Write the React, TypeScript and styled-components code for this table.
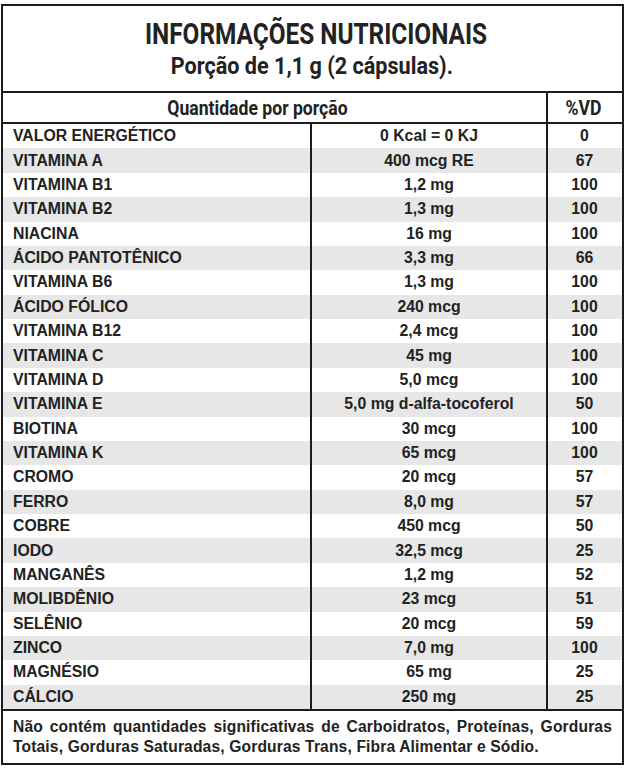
import React from "react";
import styled, { createGlobalStyle } from "styled-components";

const GlobalStyle = createGlobalStyle`
  html, body {
    margin: 0;
    padding: 0;
    background: #ffffff;
  }
  body {
    font-family: "Liberation Sans", Arial, sans-serif;
    color: #222222;
  }
`;

const ROWS: [string, string, string][] = [
  ["VALOR ENERGÉTICO", "0 Kcal = 0 KJ", "0"],
  ["VITAMINA A", "400 mcg RE", "67"],
  ["VITAMINA B1", "1,2 mg", "100"],
  ["VITAMINA B2", "1,3 mg", "100"],
  ["NIACINA", "16 mg", "100"],
  ["ÁCIDO PANTOTÊNICO", "3,3 mg", "66"],
  ["VITAMINA B6", "1,3 mg", "100"],
  ["ÁCIDO FÓLICO", "240 mcg", "100"],
  ["VITAMINA B12", "2,4 mcg", "100"],
  ["VITAMINA C", "45 mg", "100"],
  ["VITAMINA D", "5,0 mcg", "100"],
  ["VITAMINA E", "5,0 mg d-alfa-tocoferol", "50"],
  ["BIOTINA", "30 mcg", "100"],
  ["VITAMINA K", "65 mcg", "100"],
  ["CROMO", "20 mcg", "57"],
  ["FERRO", "8,0 mg", "57"],
  ["COBRE", "450 mcg", "50"],
  ["IODO", "32,5 mcg", "25"],
  ["MANGANÊS", "1,2 mg", "52"],
  ["MOLIBDÊNIO", "23 mcg", "51"],
  ["SELÊNIO", "20 mcg", "59"],
  ["ZINCO", "7,0 mg", "100"],
  ["MAGNÉSIO", "65 mg", "25"],
  ["CÁLCIO", "250 mg", "25"],
];

const Panel = styled.div`
  width: 623px;
  margin: 4px 0 0 1px;
  border: 2px solid #1c1c1c;
  box-sizing: border-box;
  background: #fff;
`;

const TitleBlock = styled.div`
  height: 87px;
  border-bottom: 2px solid #1c1c1c;
  display: flex;
  flex-direction: column;
  align-items: center;
  justify-content: center;
  gap: 2px;
  padding-top: 1px;
  box-sizing: border-box;
`;

const Title = styled.div`
  font-family: "Roboto", sans-serif;
  font-weight: 700;
  font-size: 29px;
  line-height: 32px;
  color: #222;
  transform: scaleX(0.84);
  padding-left: 8px;
`;

const Subtitle = styled.div`
  font-family: "Roboto", sans-serif;
  font-weight: 700;
  font-size: 24px;
  line-height: 28px;
  color: #222;
  transform: scaleX(0.9);
  padding-right: 2px;
`;

const HeadRow = styled.div`
  display: grid;
  grid-template-columns: 543px 73px;
  height: 29px;
  border-bottom: 2px solid #1c1c1c;
`;

const HeadCell = styled.div<{ $shift?: number }>`
  display: flex;
  align-items: center;
  justify-content: center;
  font-family: "Roboto", sans-serif;
  font-weight: 700;
  font-size: 20px;
  color: #222;
  padding-right: ${(p) => p.$shift ?? 0}px;
  & + & {
    border-left: 2px solid #1c1c1c;
  }
  span {
    display: inline-block;
    transform: scaleX(0.88);
  }
`;

const Body = styled.div`
  display: grid;
  grid-template-rows: repeat(24, 24.375px);
  border-bottom: 2px solid #1c1c1c;
`;

const Row = styled.div<{ $shade: boolean }>`
  display: grid;
  grid-template-columns: 307px 236px 75px;
  background: ${(p) => (p.$shade ? "#e7e7e7" : "#ffffff")};
`;

const Cell = styled.div<{ $align: "left" | "center" }>`
  display: flex;
  align-items: center;
  justify-content: ${(p) => (p.$align === "left" ? "flex-start" : "center")};
  padding-left: ${(p) => (p.$align === "left" ? "10px" : "0")};
  font-size: 15.8px;
  font-weight: 700;
  color: #222;
  white-space: nowrap;
  & + & {
    border-left: 2px solid #1c1c1c;
  }
`;

const Footer = styled.div`
  height: 52px;
  padding: 6px 10px 0 10px;
  box-sizing: border-box;
  font-size: 15.6px;
  letter-spacing: 0.15px;
  font-weight: 700;
  line-height: 20px;
  text-align: justify;
  color: #222;
`;

export default function App() {
  return (
    <>
      <GlobalStyle />
      <Panel>
        <TitleBlock>
          <Title>INFORMAÇÕES NUTRICIONAIS</Title>
          <Subtitle>Porção de 1,1 g (2 cápsulas).</Subtitle>
        </TitleBlock>
        <HeadRow>
          <HeadCell $shift={34}>
            <span>Quantidade por porção</span>
          </HeadCell>
          <HeadCell>
            <span>%VD</span>
          </HeadCell>
        </HeadRow>
        <Body>
          {ROWS.map(([name, amount, vd], i) => (
            <Row key={name} $shade={i % 2 === 1}>
              <Cell $align="left">{name}</Cell>
              <Cell $align="center">{amount}</Cell>
              <Cell $align="center">{vd}</Cell>
            </Row>
          ))}
        </Body>
        <Footer>
          Não contém quantidades significativas de Carboidratos, Proteínas, Gorduras
          Totais, Gorduras Saturadas, Gorduras Trans, Fibra Alimentar e Sódio.
        </Footer>
      </Panel>
    </>
  );
}
